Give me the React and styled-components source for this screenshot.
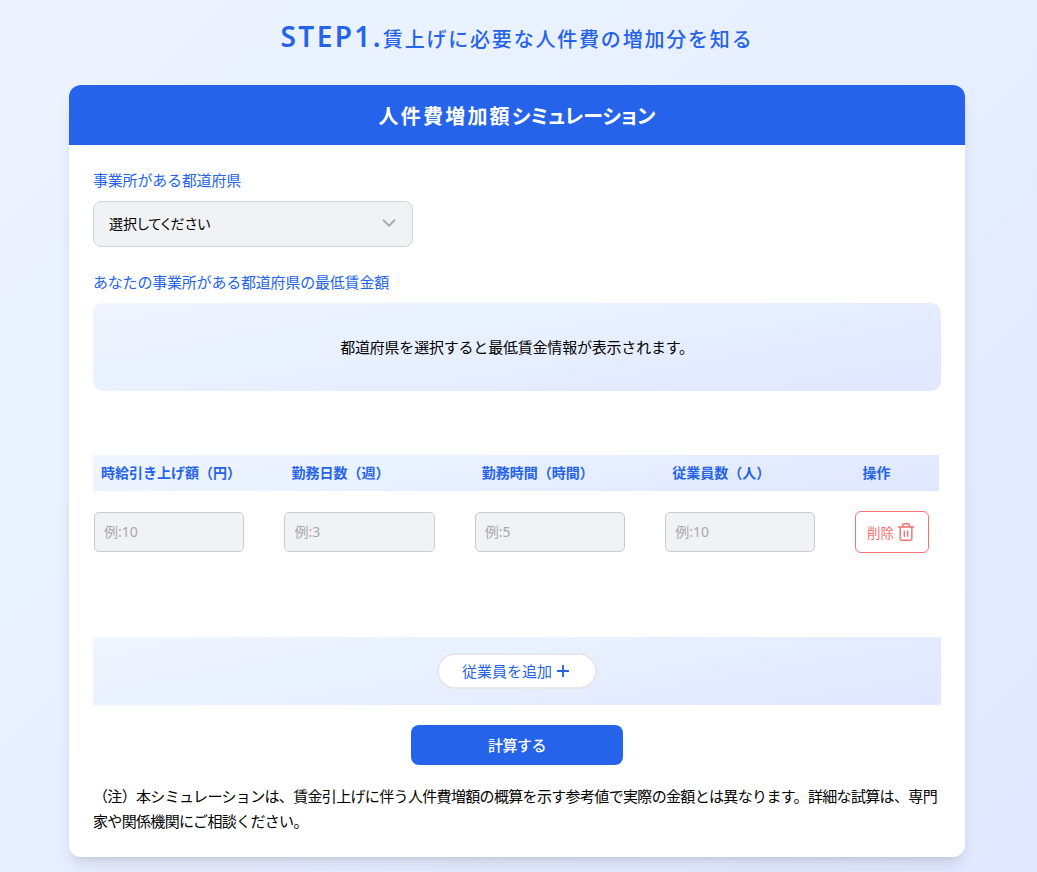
import React from 'react';
import styled, { createGlobalStyle } from 'styled-components';
import { ChevronDown, Trash2, Plus } from 'lucide-react';

const GlobalStyle = createGlobalStyle`
  html, body {
    margin: 0;
    padding: 0;
  }
  body {
    font-family: "Noto Sans", "Noto Sans CJK JP", sans-serif;
    font-feature-settings: "pkna";
    color: #000;
  }
  * {
    box-sizing: border-box;
  }
`;

const Page = styled.div`
  height: 872px;
  overflow: hidden;
  background: linear-gradient(135deg, #edf4ff 0%, #e1e8ff 100%);
  padding: 17px 3px 0 0;
`;

const Title = styled.h1`
  margin: 0 0 29px;
  height: 39px;
  display: flex;
  justify-content: center;
  align-items: baseline;
  color: #2563eb;
  font-weight: 500;
  line-height: 39px;

  .step {
    font-size: 28px;
    font-weight: 600;
    letter-spacing: 2.4px;
  }
  .rest {
    font-size: 20px;
    letter-spacing: 1.8px;
  }
`;

const Card = styled.section`
  width: 896px;
  margin: 0 auto;
  background: #fff;
  border-radius: 12px;
  overflow: hidden;
  box-shadow: 0 10px 15px -3px rgba(0, 0, 0, 0.1), 0 4px 6px -4px rgba(0, 0, 0, 0.1);
`;

const CardHeader = styled.header`
  height: 60px;
  background: #2563eb;
  color: #fff;
  display: flex;
  align-items: center;
  justify-content: center;
  font-size: 20px;
  font-weight: 600;
  letter-spacing: 2.2px;

  span {
    font-feature-settings: "palt";
    letter-spacing: 0;
  }
`;

const CardBody = styled.div`
  padding: 24px 24px 23px;
`;

const Label = styled.div`
  color: #2563eb;
  font-size: 15px;
  letter-spacing: -0.2px;
  line-height: 22px;
  margin-bottom: 8px;
  height: 24px;
`;

const Select = styled.div`
  width: 320px;
  height: 46px;
  background: #f1f2f5;
  border: 1px solid #cbd5e1;
  border-radius: 8px;
  padding: 0 12px 2px 15px;
  display: flex;
  align-items: center;
  justify-content: space-between;
  font-size: 14px;
  font-feature-settings: "palt";
  margin-bottom: 24px;

  svg {
    color: #a9abaf;
  }
`;

const InfoBox = styled.div`
  height: 88px;
  border-radius: 10px;
  background: linear-gradient(170deg, #eff6ff 0%, #e0e7ff 100%);
  display: flex;
  align-items: center;
  justify-content: center;
  font-size: 15px;
  letter-spacing: -0.2px;
  padding-bottom: 2px;
  margin-bottom: 64px;
`;

const Grid = styled.div`
  display: grid;
  width: 846px;
  grid-template-columns: 190.4px 190.4px 190.4px 190.4px 84.4px;
`;

const HeaderRow = styled(Grid)`
  height: 36px;
  align-items: center;
  padding-bottom: 2px;
  background: linear-gradient(170deg, #eff6ff 0%, #e0e7ff 100%);
`;

const HeaderCell = styled.div`
  padding-left: 8px;
  font-size: 14px;
  font-weight: 600;
  color: #2563eb;
`;

const BodyRow = styled(Grid)`
  height: 146px;
  padding-top: 20px;
  align-items: start;
`;

const Field = styled.input`
  display: block;
  width: 150.3px;
  height: 40px;
  margin: 1px 0 0 1px;
  background: #f1f2f5;
  border: 1px solid #cccccc;
  border-radius: 5px;
  padding: 0 9px 1px;
  font-family: inherit;
  font-size: 14px;

  &::placeholder {
    color: #a8a8ad;
  }
`;

const DeleteButton = styled.button`
  width: 74px;
  height: 42px;
  background: #fff;
  border: 1px solid #f87171;
  border-radius: 6px;
  color: #f87171;
  font-family: inherit;
  font-size: 13.5px;
  display: flex;
  align-items: center;
  justify-content: center;
  gap: 2px;
  padding: 0;
`;

const AddBar = styled.div`
  height: 68px;
  background: linear-gradient(170deg, #eff6ff 0%, #e0e7ff 100%);
  display: flex;
  align-items: center;
  justify-content: center;
  margin-bottom: 20px;
`;

const AddButton = styled.button`
  width: 160px;
  height: 36px;
  border-radius: 18px;
  background: #fff;
  border: 2px solid #e5e7eb;
  color: #2563eb;
  font-family: inherit;
  font-size: 15px;
  display: flex;
  align-items: center;
  justify-content: center;
  gap: 2px;
  padding: 0 0 2px;

  svg {
    margin-top: 2px;
  }
`;

const SubmitRow = styled.div`
  display: flex;
  justify-content: center;
  margin-bottom: 19px;
`;

const SubmitButton = styled.button`
  width: 212px;
  height: 40px;
  background: #2563eb;
  color: #fff;
  border: 0;
  border-radius: 8px;
  font-family: inherit;
  font-size: 15px;
  font-weight: 500;
  letter-spacing: -0.5px;
  padding: 0 0 2px;
`;

const Note = styled.p`
  margin: 0;
  font-size: 15px;
  letter-spacing: -0.66px;
  line-height: 25px;
`;

const columns = ['時給引き上げ額（円）', '勤務日数（週）', '勤務時間（時間）', '従業員数（人）', '操作'];
const placeholders = ['例:10', '例:3', '例:5', '例:10'];

const App = () => {
  return (
    <Page>
      <GlobalStyle />
      <Title>
        <span className='step'>STEP1.</span>
        <span className='rest'>賃上げに必要な人件費の増加分を知る</span>
      </Title>
      <Card>
        <CardHeader>
          人件費増加額<span>シミュレーション</span>
        </CardHeader>
        <CardBody>
          <Label>事業所がある都道府県</Label>
          <Select>
            <span>選択してください</span>
            <ChevronDown size={22} />
          </Select>
          <Label>あなたの事業所がある都道府県の最低賃金額</Label>
          <InfoBox>都道府県を選択すると最低賃金情報が表示されます。</InfoBox>
          <HeaderRow>
            {columns.map((c) => (
              <HeaderCell key={c}>{c}</HeaderCell>
            ))}
          </HeaderRow>
          <BodyRow>
            {placeholders.map((p, i) => (
              <Field key={i} placeholder={p} />
            ))}
            <DeleteButton>
              削除
              <Trash2 size={20} strokeWidth={1.75} />
            </DeleteButton>
          </BodyRow>
          <AddBar>
            <AddButton>
              従業員を追加
              <Plus size={18} strokeWidth={2.5} />
            </AddButton>
          </AddBar>
          <SubmitRow>
            <SubmitButton>計算する</SubmitButton>
          </SubmitRow>
          <Note>
            （注）本シミュレーションは、賃金引上げに伴う人件費増額の概算を示す参考値で実際の金額とは異なります。詳細な試算は、専門家や関係機関にご相談ください。
          </Note>
        </CardBody>
      </Card>
    </Page>
  );
};

export default App;
